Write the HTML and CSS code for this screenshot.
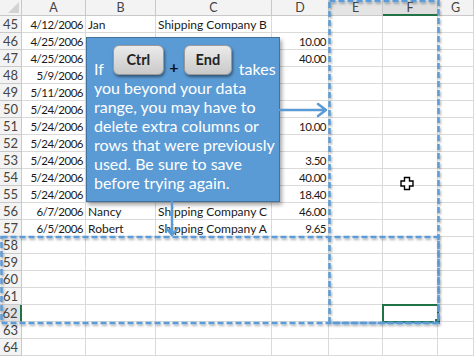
FILE: index.html
```html
<!DOCTYPE HTML>
<html>
<head>
<link rel="stylesheet" href="styles.css">
</head>
<body>
	<div class="page">
		<div id="sheet" class="sheet">
			<div class="cell hd corner"><span class="tri"></span></div>
			<div class="cell hd">A</div>
			<div class="cell hd">B</div>
			<div class="cell hd">C</div>
			<div class="cell hd">D</div>
			<div class="cell hd hd-on">E</div>
			<div class="cell hd hd-sel">F</div>
			<div class="cell hd">G</div>
		</div>

		<div class="callout">
			<div class="first">
				<span>If</span>
				<span class="key key-ctrl">Ctrl</span>
				<span class="plus">+</span>
				<span class="key key-end">End</span>
				<span>takes</span>
			</div>
			<p>you beyond your data<br>range, you may have to<br>delete extra columns or<br>rows that were previously<br>used. Be sure to save<br>before trying again.</p>
		</div>

		<svg class="marks" width="474" height="357" viewBox="0 0 474 357">
			<defs>
				<filter id="sh" x="-5%" y="-5%" width="110%" height="110%">
					<feDropShadow dx="1" dy="1.5" stdDeviation="1" flood-color="#000" flood-opacity="0.35"/>
				</filter>
			</defs>
			<g fill="none" stroke="#5b9bd5" stroke-width="2.5" stroke-dasharray="6 3" filter="url(#sh)">
				<rect x="329.5" y="1" width="109" height="322"/>
				<rect x="1.5" y="237" width="437" height="86"/>
			</g>
			<g fill="none" stroke="#5b9bd5" stroke-width="2.5" stroke-linecap="round" stroke-linejoin="round">
				<path d="M280 110 H326 M318 104 L326 110 L318 116"/>
				<path d="M172 202 V235 M166 228 L172 235 L178 228"/>
			</g>
			<path class="cross" d="M404.5 177.5 h5 v3.5 h3.5 v5 h-3.5 v3.5 h-5 v-3.5 h-3.5 v-5 h3.5 z" fill="#fff" stroke="#000" stroke-width="1.4"/>
		</svg>
	</div>

<script type="text/javascript">
	var data = {
		45: ['4/12/2006', 'Jan', 'Shipping Company B', ''],
		46: ['4/25/2006', '', '', '10.00'],
		47: ['4/25/2006', '', '', '40.00'],
		48: ['5/9/2006', '', '', ''],
		49: ['5/11/2006', '', '', ''],
		50: ['5/24/2006', '', '', ''],
		51: ['5/24/2006', '', '', '10.00'],
		52: ['5/24/2006', '', '', ''],
		53: ['5/24/2006', '', '', '3.50'],
		54: ['5/24/2006', '', '', '40.00'],
		55: ['5/24/2006', '', '', '18.40'],
		56: ['6/7/2006', 'Nancy', 'Shipping Company C', '46.00'],
		57: ['6/5/2006', 'Robert', 'Shipping Company A', '9.65']
	};

	var html = '';
	for (var r = 45; r <= 64; r++) {
		var d = data[r] || ['', '', '', ''];
		html += '<div class="cell rh' + (r == 62 ? ' rh-sel' : '') + '">' + r + '</div>';
		html += '<div class="cell num">' + d[0] + '</div>';
		html += '<div class="cell">' + d[1] + '</div>';
		html += '<div class="cell">' + d[2] + '</div>';
		html += '<div class="cell num">' + d[3] + '</div>';
		html += '<div class="cell"></div>';
		html += '<div class="cell' + (r == 62 ? ' active' : '') + '"></div>';
		html += '<div class="cell"></div>';
	}
	document.getElementById('sheet').insertAdjacentHTML('beforeend', html);
</script>
</body>
</html>
```

FILE: styles.css
```css
body {
	margin: 0;
	background: #fff;
	font-family: Lato, "Liberation Sans", sans-serif;
}

.page {
	position: relative;
	width: 474px;
	height: 357px;
	overflow: hidden;
}

.sheet {
	display: grid;
	grid-template-columns: 22px 64px 70px 116px 57px 54px 55px 36px;
	grid-template-rows: 16px;
	grid-auto-rows: 17px;
}

.cell {
	box-sizing: border-box;
	border-right: 1px solid #dadada;
	border-bottom: 1px solid #dadada;
	padding: 0 2px;
	font-size: 12px;
	line-height: 17px;
	color: #1a1a1a;
	white-space: nowrap;
}

.cell.num {
	text-align: right;
	letter-spacing: -0.5px;
	font-size: 11.5px;
}

.hd {
	background: #f3f3f3;
	border-color: #c9c9c9;
	text-align: center;
	color: #444;
	font-size: 12.5px;
	line-height: 15px;
}

.hd-on {
	background: #e4e4e4;
}

.hd-sel {
	background: #dedede;
	border-bottom: 2px solid #217346;
}

.corner {
	position: relative;
}

.corner .tri {
	position: absolute;
	right: 2px;
	bottom: 2px;
	width: 0;
	height: 0;
	border-left: 11px solid transparent;
	border-bottom: 11px solid #d3d3d3;
}

.rh {
	background: #f3f3f3;
	border-color: #c9c9c9;
	text-align: center;
	color: #444;
	font-size: 13px;
	padding: 0;
}

.rh-sel {
	background: #e1e1e1;
	border-right: 2px solid #217346;
}

.active {
	position: relative;
	outline: 2px solid #217346;
	outline-offset: -1px;
}

.active:after {
	content: "";
	position: absolute;
	right: -4px;
	bottom: -4px;
	width: 5px;
	height: 5px;
	background: #217346;
	border: 1px solid #fff;
}

.callout {
	position: absolute;
	left: 86px;
	top: 37px;
	box-sizing: border-box;
	width: 194px;
	height: 165px;
	padding: 6px 2px 0 7px;
	background: #5b9bd5;
	border: 1px solid #41719c;
	box-shadow: 2px 3px 4px rgba(0, 0, 0, 0.35);
	color: #fff;
	font-size: 16px;
	line-height: 19px;
	white-space: nowrap;
}

.callout .first {
	display: flex;
	align-items: flex-end;
	height: 34px;
}

.callout p {
	margin: 0;
}

.key {
	box-sizing: border-box;
	display: inline-block;
	height: 30px;
	line-height: 28px;
	text-align: center;
	color: #222;
	font-weight: bold;
	font-size: 14.5px;
	background: linear-gradient(#ebebeb, #c9c9c9);
	border: 1px solid #9a9a9a;
	border-radius: 6px;
	box-shadow: 1px 2px 3px rgba(0, 0, 0, 0.45);
	margin-bottom: 3px;
}

.key-ctrl {
	width: 51px;
	margin-left: 9px;
}

.key-end {
	width: 48px;
	margin-right: 7px;
}

.plus {
	width: 20px;
	text-align: center;
	color: #111;
	font-weight: bold;
	margin-bottom: 2px;
}

.marks {
	position: absolute;
	left: 0;
	top: 0;
	pointer-events: none;
}
```
